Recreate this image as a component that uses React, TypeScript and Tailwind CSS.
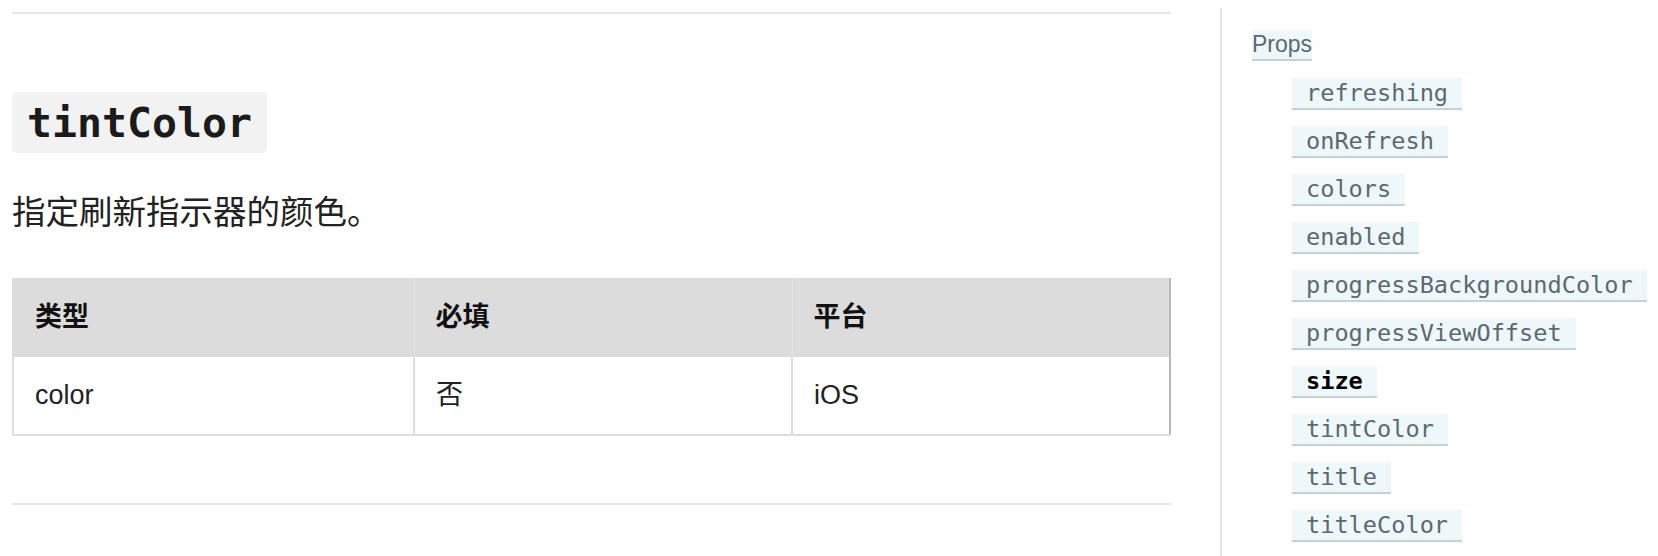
import React from 'react';

const props = [
  'refreshing',
  'onRefresh',
  'colors',
  'enabled',
  'progressBackgroundColor',
  'progressViewOffset',
  'size',
  'tintColor',
  'title',
  'titleColor',
];

const sans = "font-['Liberation_Sans','Noto_Sans_CJK_SC',sans-serif]";

const App: React.FC = () => {
  return (
    <div className={`flex w-[1658px] h-[556px] overflow-hidden bg-white ${sans}`}>
      {/* main doc column */}
      <div className="ml-[12px] w-[1159px] shrink-0 flex flex-col pt-[12px]">
        <div className="h-[2px] bg-[#e8e8e8]" />

        <div className="mt-[78px]">
          <code className="inline-block h-[61px] px-[15px] rounded-[5px] bg-[#f2f2f2] text-[41.5px] leading-[61px] font-bold text-[#1b1b1b] font-['DejaVu_Sans_Mono',monospace]">
            tintColor
          </code>
        </div>

        <p className="mt-[37px] text-[33.5px] leading-[40px] text-[#222] font-['Noto_Sans_CJK_SC',sans-serif]">
          指定刷新指示器的颜色。
        </p>

        <table className="mt-[48px] w-full border-collapse text-[27px] text-[#222]">
          <thead>
            <tr className="bg-[#dcdcdc] h-[79px]">
              <th className="w-[401px] px-[21px] text-left font-bold text-[#111] border-l-2 border-[#dcdcdc]">类型</th>
              <th className="w-[378px] px-[21px] text-left font-bold text-[#111] border-l border-[#e2e2e2]">必填</th>
              <th className="px-[21px] text-left font-bold text-[#111] border-l border-[#e2e2e2] border-r-2 border-r-[#b8b8b8]">平台</th>
            </tr>
          </thead>
          <tbody>
            <tr className="h-[78px]">
              <td className="px-[21px] border-l-2 border-b-2 border-[#dedede]">color</td>
              <td className="px-[21px] border-l-2 border-b-2 border-[#dedede]">否</td>
              <td className="px-[21px] border-l-2 border-b-2 border-[#dedede] border-r-2 border-r-[#b8b8b8]">iOS</td>
            </tr>
          </tbody>
        </table>

        <div className="mt-[67px] h-[2px] bg-[#e8e8e8]" />
      </div>

      {/* table of contents */}
      <div className="ml-[49px] mt-[8px] h-[600px] border-l-2 border-[#e2e2e2] pl-[30px] pt-[22px] flex flex-col items-start">
        <span className="block h-[31px] bg-[#eef8fb] border-b-2 border-[#c3d2d6] text-[23px] leading-[29px] text-[#5c6970]">
          Props
        </span>
        <div className="ml-[40px] mt-[17px] flex flex-col items-start gap-[16px]">
          {props.map((p) => (
            <span
              key={p}
              className={`block h-[32px] px-[14px] bg-[#eef8fb] border-b-2 border-[#c3d2d6] text-[23.6px] leading-[30px] font-['DejaVu_Sans_Mono',monospace] ${
                p === 'size' ? 'font-bold text-black' : 'text-[#5c6970]'
              }`}
            >
              {p}
            </span>
          ))}
        </div>
      </div>
    </div>
  );
};

export default App;
